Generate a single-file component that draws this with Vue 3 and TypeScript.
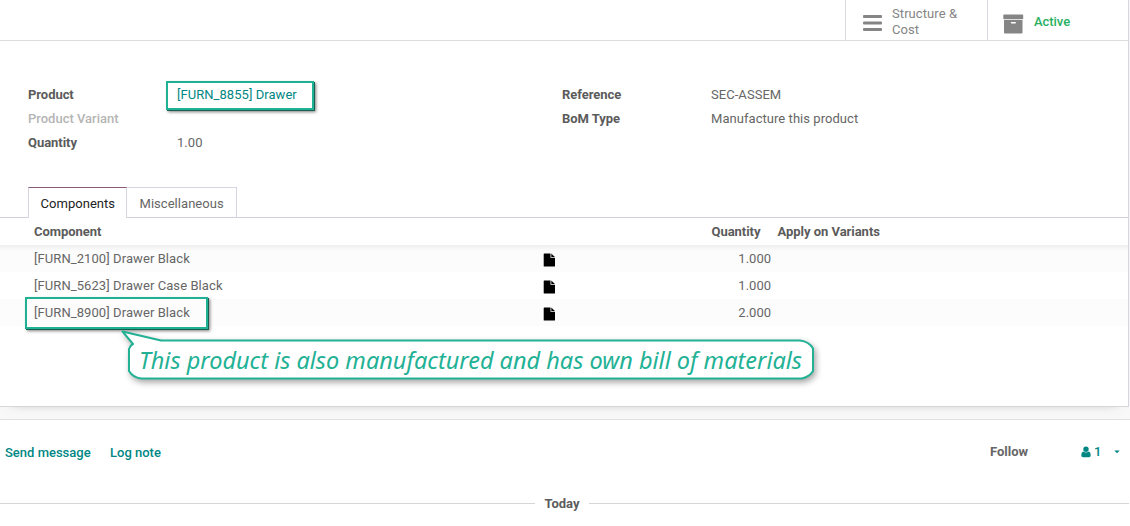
<script setup lang="ts">
interface Line { name: string; qty: string; highlighted?: boolean }

const lines: Line[] = [
  { name: '[FURN_2100] Drawer Black', qty: '1.000' },
  { name: '[FURN_5623] Drawer Case Black', qty: '1.000' },
  { name: '[FURN_8900] Drawer Black', qty: '2.000', highlighted: true },
]
</script>

<template>
  <div class="page">
    <main class="sheet">
      <header class="buttons">
        <button class="stat structure">
          <svg width="20" height="18" viewBox="0 0 20 18"><g fill="#858585"><rect y="1" width="19" height="3" rx="1" /><rect y="7.5" width="19" height="3" rx="1" /><rect y="14" width="19" height="3" rx="1" /></g></svg>
          <span>Structure &amp;<br />Cost</span>
        </button>
        <button class="stat active">
          <svg width="21" height="20" viewBox="0 0 21 20"><path fill="#858585" fill-rule="evenodd" d="M1 .5h18.500q.7 0 .7.700v3.800H.3V1.200Q.3.500 1 .500zM1 5.700h18.500v12.800q0 .9-.9.900H1.900q-.9 0-.9-.900zM8.600 8q-.8 0-.8.800t.8.800h3.600q.8 0 .8-.800T12.200 8z" /></svg>
          <span>Active</span>
        </button>
      </header>

      <section class="fields">
        <dl class="left">
          <dt>Product</dt>
          <dd class="link"><span class="mark product">[FURN_8855] Drawer</span></dd>
          <dt class="muted">Product Variant</dt>
          <dd></dd>
          <dt>Quantity</dt>
          <dd>1.00</dd>
        </dl>
        <dl class="right">
          <dt>Reference</dt>
          <dd>SEC-ASSEM</dd>
          <dt>BoM Type</dt>
          <dd>Manufacture this product</dd>
        </dl>
      </section>

      <nav class="tabs">
        <a class="tab current">Components</a>
        <a class="tab">Miscellaneous</a>
      </nav>

      <div class="table">
        <div class="row head">
          <span class="name">Component</span><span></span><span class="qty">Quantity</span><span class="variants">Apply on Variants</span>
        </div>
        <div v-for="line in lines" :key="line.name" class="row line">
          <span class="name"><span :class="{ 'mark component': line.highlighted }">{{ line.name }}</span></span>
          <svg class="file" width="13" height="14" viewBox="0 0 13 14"><path fill="#000" d="M1.300.500h6.200V4.700h4.500v8.200q0 .6-.6.600H1.300q-.6 0-.6-.600V1.100Q.7.500 1.300.500zM8.300 .600l3.600 3.500H8.300z" /></svg>
          <span class="qty">{{ line.qty }}</span>
          <span></span>
        </div>
      </div>
    </main>

    <svg class="callout" width="720" height="66" viewBox="0 0 720 66">
      <path class="bubble" d="M12.500 6.500L51 15.500H690Q699 16.500 703 23.500V46Q700 51.500 692 53.500H31Q23 52.500 19 46V24Q20 20.500 23 19Z" />
      <text x="29" y="43.500" textLength="663" lengthAdjust="spacingAndGlyphs">This product is also manufactured and has own bill of materials</text>
    </svg>

    <footer class="chatter">
      <div class="actions">
        <a class="send">Send message</a>
        <a class="log">Log note</a>
        <span class="follow">Follow</span>
        <a class="followers">
          <svg width="10" height="12" viewBox="0 0 10 12"><path fill="#008784" d="M5 .5a2.700 2.700 0 1 1 0 5.400A2.700 2.700 0 0 1 5 .500zM2.300 5.400q2.700 2 5.400 0Q9.700 6 9.700 9.500q0 1.800-1.700 1.800H2Q.3 11.300.3 9.500.3 6 2.300 5.400z" /></svg>
          <span>1</span>
          <svg class="caret" width="6" height="4" viewBox="0 0 6 4"><path fill="#008784" d="M.3.500h5.400L3 3.300z" /></svg>
        </a>
      </div>
      <div class="today"><span>Today</span></div>
    </footer>
  </div>
</template>

<style>
body { margin: 0; background: #fff; overflow: hidden; }
</style>

<style scoped>
* { box-sizing: border-box; }
.page { position: relative; width: 1130px; height: 526px; overflow: hidden; font: 13px/24px Roboto, "Liberation Sans", sans-serif; color: #666; background: #f8f8f8; }
.sheet { width: 1129px; height: 407px; background: #fff; border-right: 1px solid #d5d7de; border-bottom: 1px solid #d5d7da; box-shadow: 0 5px 12px -12px rgba(0, 0, 0, .6); }
.buttons { display: flex; justify-content: flex-end; height: 41px; border-bottom: 1px solid #dadce0; }
.stat { display: flex; align-items: center; height: 40px; padding: 0; border: 0; border-left: 1px solid #d8dae0; background: none; font: 13px/16px Roboto, sans-serif; color: #858585; text-align: left; }
.structure { width: 142px; padding: 4px 0 0 17px; gap: 9px; letter-spacing: .08px; }
.structure svg { margin-top: 2px; }
.active { width: 141px; padding: 4px 0 0 15px; gap: 10px; color: #28b062; font-weight: 500; letter-spacing: -.05px; }
.active span { margin-top: -1px; }
.active svg { margin-top: 3px; }
.fields { display: flex; height: 146px; padding: 42px 0 0 28px; }
dl { display: grid; grid-template-columns: 149px auto; grid-auto-rows: 24px; align-content: start; margin: 0; }
.left { width: 534px; }
dt { font-weight: 700; letter-spacing: -.05px; color: #5b5b5b; }
dt.muted { color: #b5b5b5; font-weight: 500; letter-spacing: 0; }
dd { margin: 0; letter-spacing: .05px; }
.link { color: #008784; }
.mark { display: inline-block; border: 2px solid #1fb193; box-shadow: 1px 1px 0 #17604f, 2px 2px 3px rgba(0, 0, 0, .5); }
.product { width: 148px; height: 29px; margin: -2px 0 -5px -11px; padding: 0 0 0 9px; line-height: 24px; }
.tabs { display: flex; height: 31px; padding-left: 28px; border-bottom: 1px solid #cfd2dc; }
.tab { height: 30px; width: 110px; padding: 0 12.500px; border: 1px solid #d5d6df; border-left: 0; border-bottom: 0; line-height: 32px; letter-spacing: .04px; }
.tab.current { height: 31px; width: 99px; padding-left: 11.500px; border-left: 1px solid #d5d6df; border-top-color: #875a7b; background: #fff; color: #222; }
.row { display: grid; grid-template-columns: 543px 127px 101px 1fr; height: 27px; align-items: start; line-height: 27px; }
.head { font-weight: 700; color: #5b5b5b; line-height: 28px; letter-spacing: -.03px; }
.head .qty { padding-right: 10.500px; }
.name { padding-left: 34px; }
.line .name { letter-spacing: .08px; }
.qty { text-align: right; }
.variants { padding-left: 6.500px; }
.line:nth-child(even) { background: #fcfcfc; }
.line:nth-child(2) { background: linear-gradient(#eee, #fcfcfc 6px); }
.file { margin-top: 7.500px; }
.component { width: 183px; height: 32px; margin: -2px 0 -7px -9px; padding-left: 7px; line-height: 27px; }
.callout { position: absolute; left: 110px; top: 325px; overflow: visible; }
.bubble { fill: #fff; stroke: #22b194; stroke-width: 2; stroke-linejoin: round; filter: drop-shadow(2px 3px 3px rgba(0, 0, 0, .35)); }
.callout text { font: italic 24px "Noto Sans", sans-serif; fill: #22b194; }
.chatter { height: 107px; margin-top: 12px; border-top: 1px solid #dfe1e4; background: #fff; }
.actions { display: flex; height: 72px; padding: 21px 0 0 5px; font-weight: 500; }
.send, .log { color: #008784; }
.send { width: 105px; }
.log { width: 880px; }
.follow { width: 91px; margin-top: -1px; font-weight: 700; }
.followers { display: flex; height: 22px; align-items: center; color: #008784; gap: 3px; }
.caret { margin-left: 10px; }
.today { display: flex; align-items: center; gap: 9px; width: 1124px; font-weight: 700; color: #5b5b5b; }
.today::before, .today::after { content: ""; flex: 1; height: 1px; margin-top: -1px; background: #d4d6d8; }
.today::after { margin-right: -5px; flex: 1 1 5px; }
</style>
